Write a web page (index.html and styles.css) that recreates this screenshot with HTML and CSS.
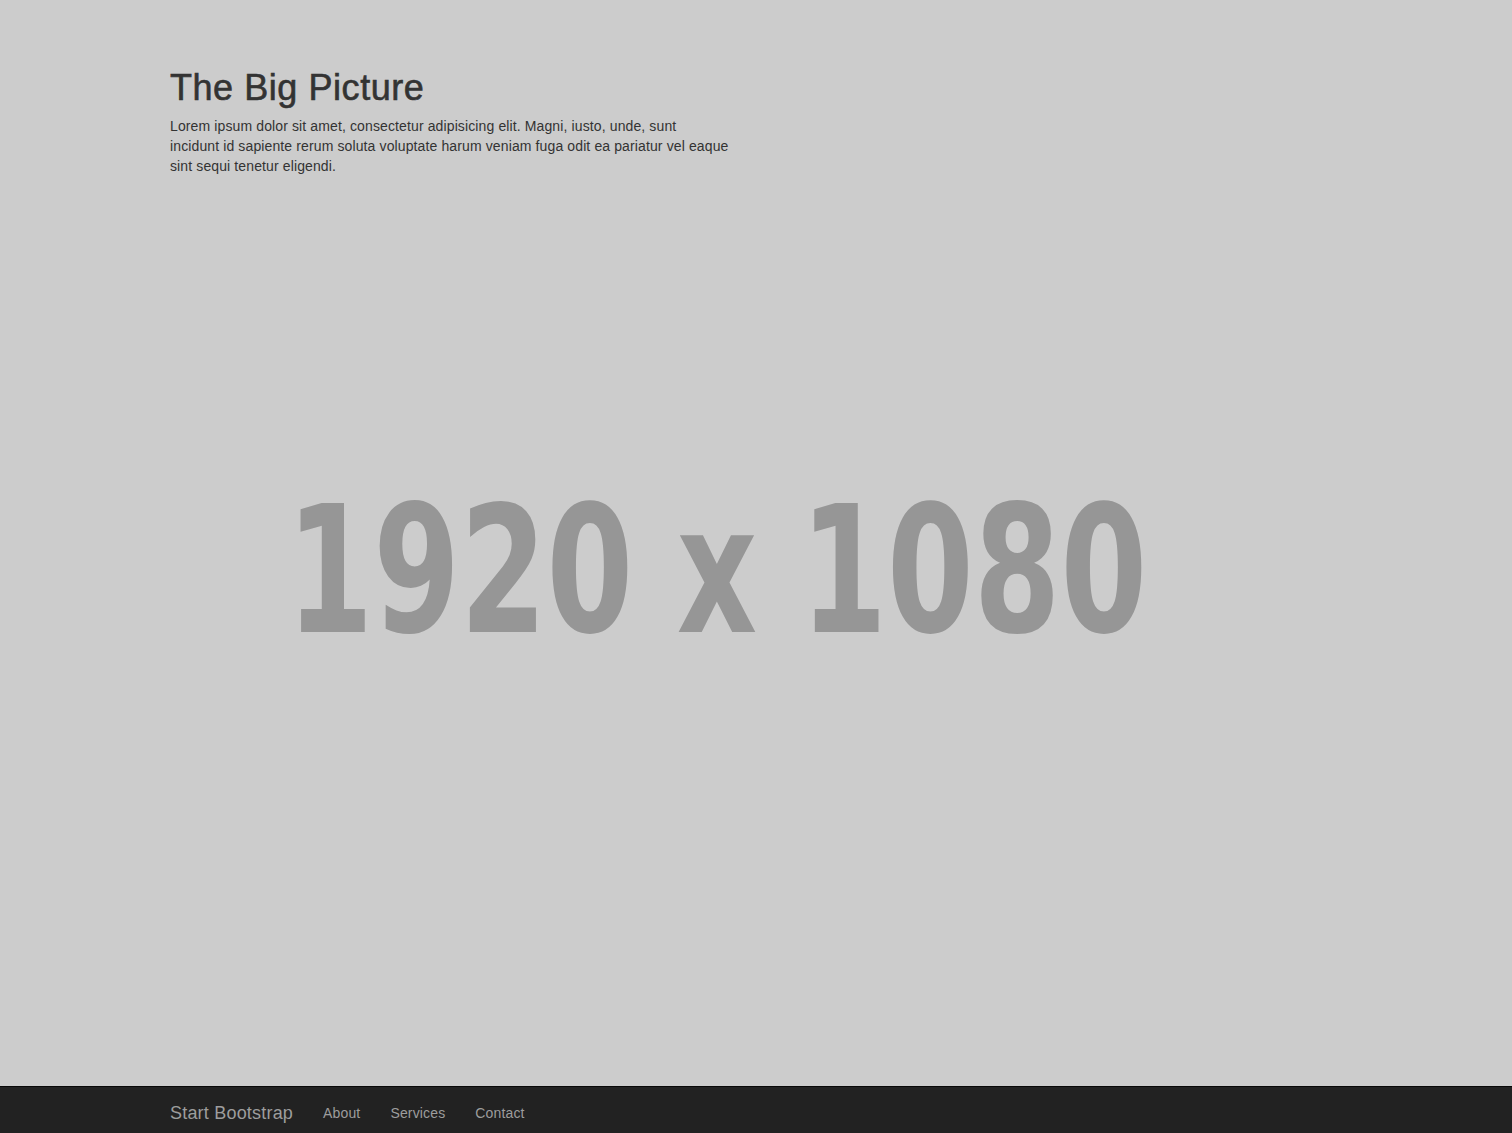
FILE: index.html
```html
<!DOCTYPE html>
<html lang="en">
<head>
<meta charset="utf-8">
<title>The Big Picture</title>
<link rel="stylesheet" href="styles.css">
</head>
<body>
<div class="backdrop" aria-hidden="true"><span class="backdrop-text">1920 x 1080</span></div>
<main class="container">
  <div class="col">
    <h1 class="title">The Big Picture</h1>
    <p class="lead-text">Lorem ipsum dolor sit amet, consectetur adipisicing elit. Magni, iusto, unde, sunt<br> incidunt id sapiente rerum soluta voluptate harum veniam fuga odit ea pariatur vel eaque sint sequi tenetur eligendi.</p>
  </div>
</main>
<nav class="navbar">
  <div class="navbar-inner">
    <a class="brand" href="#">Start Bootstrap</a>
    <ul class="nav-links">
      <li><a href="#">About</a></li>
      <li><a href="#">Services</a></li>
      <li><a href="#">Contact</a></li>
    </ul>
  </div>
</nav>
</body>
</html>
```
FILE: styles.css
```css
html, body {
  margin: 0;
  padding: 0;
}
body {
  height: 100vh;
  overflow: hidden;
  display: flex;
  flex-direction: column;
  background: #cccccc;
  font-family: "Liberation Sans", Arial, sans-serif;
  color: #333333;
  position: relative;
}
.backdrop {
  position: absolute;
  left: 0;
  right: 78px;
  top: 484px;
  text-align: center;
  pointer-events: none;
}
.backdrop-text {
  display: inline-block;
  font-family: "DejaVu Sans Condensed", "DejaVu Sans", sans-serif;
  font-stretch: condensed;
  font-weight: bold;
  font-size: 176px;
  line-height: 1;
  color: #969696;
  white-space: nowrap;
  transform: scaleX(0.787);
  transform-origin: center;
}
.container {
  flex: 1 1 auto;
  min-height: 0;
  width: 1172px;
  margin: 0 auto;
  padding-top: 68px;
  position: relative;
}
.col {
  width: 566px;
}
.title {
  margin: 0 0 8px;
  font-size: 36px;
  line-height: 1.1;
  font-weight: normal;
  letter-spacing: 0.55px;
  -webkit-text-stroke: 0.6px #333333;
  color: #333333;
}
.lead-text {
  margin: 0;
  font-size: 14px;
  line-height: 20px;
  letter-spacing: 0.12px;
  color: #333333;
}
.navbar {
  flex: none;
  height: 46px;
  overflow: hidden;
  background: #222222;
  border-top: 1px solid #080808;
  position: relative;
}
.navbar-inner {
  width: 1172px;
  margin: 0 auto;
  display: flex;
  align-items: flex-start;
}
.brand {
  padding: 16px 15px 14px 0;
  font-size: 18px;
  line-height: 20px;
  letter-spacing: 0.2px;
  color: #9d9d9d;
  text-decoration: none;
}
.nav-links {
  display: flex;
  list-style: none;
  margin: 0;
  padding: 0;
}
.nav-links a {
  display: block;
  padding: 16px 15px 14px;
  font-size: 14px;
  line-height: 20px;
  letter-spacing: 0.15px;
  color: #9d9d9d;
  text-decoration: none;
}
```
